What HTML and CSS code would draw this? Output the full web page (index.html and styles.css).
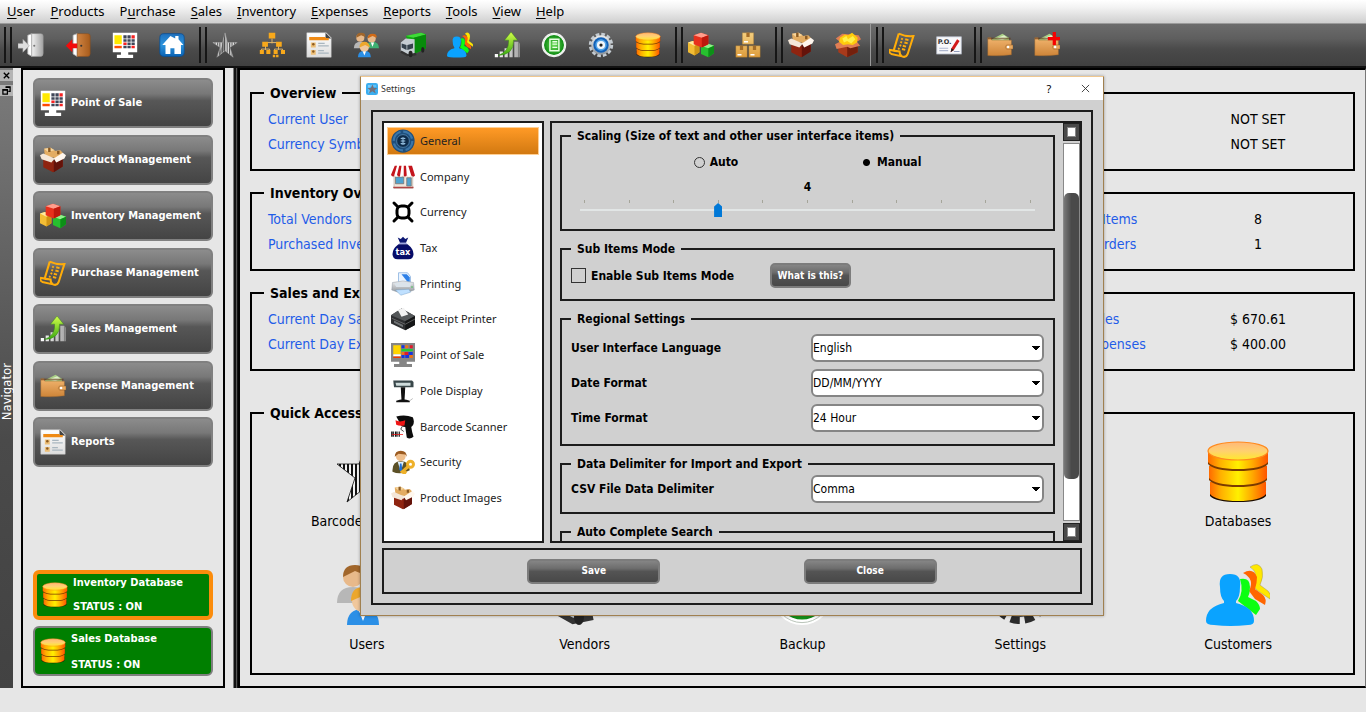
FILE: index.html
```html
<!DOCTYPE html>
<html lang="en">
<head>
<meta charset="utf-8">
<title>Settings</title>
<link rel="stylesheet" href="styles.css">
</head>
<body>
<svg class="sprite" aria-hidden="true">
  <defs>
    <linearGradient id="g-grey" x1="0" x2="1"><stop offset="0" stop-color="#f2f2f2"/><stop offset="1" stop-color="#a2a2a2"/></linearGradient>
    <linearGradient id="g-brown" x1="0" x2="1"><stop offset="0" stop-color="#d08443"/><stop offset="1" stop-color="#a85c1c"/></linearGradient>
    <linearGradient id="g-blue" x1="0" x2="0" y1="0" y2="1"><stop offset="0" stop-color="#1f70bd"/><stop offset=".5" stop-color="#2c94dd"/><stop offset="1" stop-color="#0a62b4"/></linearGradient>
    <linearGradient id="g-db" x1="0" x2="1"><stop offset="0" stop-color="#ff6a00"/><stop offset=".2" stop-color="#ffb000"/><stop offset=".5" stop-color="#fff000"/><stop offset=".75" stop-color="#ffa800"/><stop offset="1" stop-color="#ff5500"/></linearGradient>
    <linearGradient id="g-dbtop" x1="0" x2="0" y1="0" y2="1"><stop offset="0" stop-color="#ffb878"/><stop offset=".5" stop-color="#ffd070"/><stop offset="1" stop-color="#ffe92a"/></linearGradient>
    <linearGradient id="g-bar" x1="0" x2="1"><stop offset="0" stop-color="#ffffff"/><stop offset="1" stop-color="#aaaaaa"/></linearGradient>
    <linearGradient id="g-arrow" x1="0" x2="0" y1="0" y2="1"><stop offset="0" stop-color="#d4ff4a"/><stop offset="1" stop-color="#3aa812"/></linearGradient>
    <radialGradient id="g-green"><stop offset="0" stop-color="#6ede5a"/><stop offset="1" stop-color="#0d8a12"/></radialGradient>
    <linearGradient id="g-card" x1="0" x2="0" y1="0" y2="1"><stop offset="0" stop-color="#f4cf7f"/><stop offset="1" stop-color="#dd9c3c"/></linearGradient>
    <linearGradient id="g-leather" x1="0" x2="0" y1="0" y2="1"><stop offset="0" stop-color="#f2b56f"/><stop offset="1" stop-color="#cd8438"/></linearGradient>
    <linearGradient id="g-page" x1="0" x2="0" y1="0" y2="1"><stop offset="0" stop-color="#ffffff"/><stop offset="1" stop-color="#dcdcdc"/></linearGradient>
    <linearGradient id="g-metal" x1="0" x2="0" y1="0" y2="1"><stop offset="0" stop-color="#eeeeee"/><stop offset="1" stop-color="#8f959b"/></linearGradient>
    <pattern id="p-stripe" width="3" height="4" patternUnits="userSpaceOnUse"><rect width="3" height="4" fill="#e4e4e4"/><rect width="1.4" height="4" fill="#555"/></pattern>
    <pattern id="p-stripe-dark" width="2" height="4" patternUnits="userSpaceOnUse"><rect width="2" height="4" fill="#f2f2f2"/><rect width="1" height="4" fill="#111"/></pattern>
  </defs>

  <symbol id="login" viewBox="0 0 32 32">
    <path d="M12 4 17 2v28l-5-3z" fill="#fff" stroke="#aaa"/><path d="M17 2h11q3 0 3 3v21q0 4-3 4H17z" fill="url(#g-grey)" stroke="#9a9a9a" stroke-width=".6"/>
    <path d="M0 14h6V9l8 8-8 8v-5H0z" fill="#dedede" stroke="#999" stroke-width=".6"/><circle cx="20" cy="17" r="1.3" fill="#777"/>
  </symbol>
  <symbol id="logout" viewBox="0 0 32 32">
    <path d="M10 4 15 2v28l-5-3z" fill="#fff" stroke="#bbb"/><path d="M15 2h13q3 0 3 3v21q0 4-3 4H15z" fill="url(#g-brown)" stroke="#8a4c18" stroke-width=".6"/>
    <path d="M15 14H9V9l-8 8 8 8v-5h6z" fill="#f30b0b"/><circle cx="20" cy="17" r="1.3" fill="#333"/>
  </symbol>
  <symbol id="pos" viewBox="0 0 32 32">
    <path d="M1 1h30v24H20v3h6v4H6v-4h5v-3H1z" fill="#fff"/><rect x="3" y="4" width="9" height="11" fill="#ffe900"/><rect x="3" y="17" width="9" height="3" fill="#ff4a00"/>
    <path d="M14 4h4v4h-4zM19 4h4v4h-4zM14 9h4v3h-4zM19 9h4v3h-4zM24 9h4v3h-4zM19 13h4v3h-4zM24 13h4v3h-4zM14 17h4v3h-4zM19 17h4v3h-4z" fill="#3f4658"/><path d="M24 4h4v4h-4zM14 13h4v3h-4zM24 17h4v3h-4z" fill="#f52222"/>
  </symbol>
  <symbol id="home" viewBox="0 0 32 32">
    <rect x="1" y="2" width="30" height="28" rx="5" fill="url(#g-blue)" stroke="#0a4f94"/><path d="M14 5 4 16h4v11h6v-7h5v7h8V16h3l-6-7V5h-4v3z" fill="#fff"/>
  </symbol>
  <symbol id="star" viewBox="0 0 32 32">
    <path d="m16 1 3 12h12l-9 6 4 12-10-8-10 8 4-12-9-6h12z" fill="url(#p-stripe)" stroke="#bbb" stroke-width=".5"/><path d="M16 3v19l-8 7 4-11z" fill="#333" opacity=".45"/>
  </symbol>
  <symbol id="star-dark" viewBox="0 0 32 32">
    <path d="m16 1 4 11h11l-9 7 4 12-10-8-10 8 4-12-9-7h11z" fill="url(#p-stripe-dark)" stroke="#111" stroke-width=".4"/>
  </symbol>
  <symbol id="tree" viewBox="0 0 32 32">
    <path d="M16 8v6M8 16v-3h16v3M8 17v5M24 17v5M3 24v-3h10v3M19 24v-3h10v3" fill="none" stroke="#e0b66b" stroke-width="1.2"/>
    <path d="M12 1h8v7h-8zM4 12h7v6H4zM21 12h7v6h-7zM1 22h5v5H1zM9 22h5v5H9zM18 22h5v5h-5zM27 22h5v5h-5zM17 28h3v3h-3zM21 28h3v3h-3z" fill="#f7a81b"/>
  </symbol>
  <symbol id="report" viewBox="0 0 32 32">
    <path d="M1 1h24l6 6v24H1z" fill="url(#g-page)" stroke="#c8c8c8" stroke-width=".6"/><path d="M24 1v7h7z" fill="#444"/>
    <path d="M4 6h20v1.500h4V10H4z" fill="#ef8a14"/><path d="M6 13h6v6H6zM6 22h6v6H6z" fill="#edbf77"/><circle cx="9" cy="15" r="1.500" fill="#8a5a22"/><circle cx="9" cy="24" r="1.500" fill="#8a5a22"/>
    <path d="M15 14h8M15 17h13M15 23h7M15 26h13" stroke="#a9b6bf" stroke-width="1.600"/>
  </symbol>
  <symbol id="users" viewBox="0 0 32 32">
    <path d="M1 20q0-8 8-8t8 8z" fill="#b7b7b7"/><circle cx="9" cy="7" r="5" fill="#e8b98a"/><path d="M4 7q0-6 6-6t5 5l-5-2z" fill="#a1662b"/>
    <path d="M16 20q0-8 8-8t8 8z" fill="#3fb073"/><circle cx="23" cy="8" r="5" fill="#e8b98a"/><path d="M18 8q0-6 6-6t5 5l-5-2z" fill="#d06a17"/><path d="m22 13 2 5 2-5z" fill="#fff"/>
    <path d="M6 31q0-8 8-8t8 8z" fill="#2b8fe6"/><circle cx="14" cy="19" r="5.500" fill="#f0c79c"/><path d="M8 19q0-7 6-7t7 7l-6-3z" fill="#eca72c"/><path d="m12 24 2 5 2-5z" fill="#fff"/>
  </symbol>
  <symbol id="truck" viewBox="0 0 32 32">
    <path d="M7 5 26 1l6 2v17l-14 7z" fill="#12a812"/><path d="M7 5 26 1l6 2-15 4z" fill="#3fdb38"/><path d="M17 7 32 3v17l-15 7z" fill="#078b0b"/>
    <path d="M1 13 7 8l11 1v19l-8 2-9-6z" fill="#c5cdd2"/><path d="m2 14 6 2v6l-6-3zM9 16l7-2v6l-7 2z" fill="#35424c"/><path d="M1 24l9 5 10-2" stroke="#333" stroke-width="3" fill="none"/>
    <ellipse cx="13" cy="27" rx="2.500" ry="4" fill="#222"/><ellipse cx="28" cy="22" rx="2" ry="3.500" fill="#222"/>
  </symbol>
  <symbol id="customers" viewBox="0 0 32 32">
    <path d="M22 2q4-3 6 1 1 4-1 8l4 3q2 2 1 4l-6-4-3-3q4-6-1-9z" fill="#ffe800" stroke="#8f8455" stroke-width=".2"/>
    <path d="M18.500 5q5-3 7 2 0 3-1 6l4 3q2 2 1 5l-5-3-3-4q3-6-3-9z" fill="#ff6500"/>
    <path d="M17 8q5-1 5 4 0 3-1 5l4 2q2 2 2 4l-2 3-9-7q3-5 1-11z" fill="#0cff12"/>
    <path d="M7 12q-1-6.500 5-6.500t5 6.500q0 5-2 7v1q9 2 9 9 0 2-3 2-9 1-17 0-4 0-4-2 0-7 9-9v-1q-2-2-2-7z" fill="#0aa3ff"/>
  </symbol>
  <symbol id="chart" viewBox="0 0 32 32">
    <path d="M1 27h4v4H1zM7 24h4v7H7zM13 20h4v11h-4zM19 16h4v15h-4zM25 12h5v19h-5z" fill="url(#g-bar)"/><path d="M30 12v19h2V14z" fill="#888"/>
    <path d="M5 29q14-5 13-19h-5L21 0l8 10h-5q1 18-19 19z" fill="url(#g-arrow)" stroke="#2f8613" stroke-width=".5"/>
  </symbol>
  <symbol id="backup" viewBox="0 0 32 32">
    <circle cx="16" cy="16" r="15" fill="#fff"/><circle cx="16" cy="16" r="13.800" fill="none" stroke="#b9c4b9" stroke-width=".5"/><circle cx="16" cy="16" r="12.300" fill="url(#g-green)"/>
    <path d="M11 9h11v14H11z" fill="none" stroke="#e8ffe2" stroke-width="1.800"/><path d="M14 12h6M14 15h6M14 19h6" stroke="#e8ffe2" stroke-width="1.600"/>
  </symbol>
  <symbol id="gear" viewBox="0 0 32 32">
    <circle cx="16" cy="16" r="13" fill="none" stroke="#c4cbd1" stroke-width="4" stroke-dasharray="4.400 2.400"/><circle cx="16" cy="16" r="12" fill="url(#g-metal)"/><circle cx="16" cy="16" r="9.500" fill="#1261b8"/><circle cx="16" cy="16" r="7" fill="#55a6ea"/><circle cx="16" cy="16" r="5" fill="#f2f6fa"/><circle cx="16" cy="16" r="2" fill="#222"/>
  </symbol>
  <symbol id="gear-dark" viewBox="0 0 32 32">
    <circle cx="16" cy="15" r="13" fill="none" stroke="#2b2b2b" stroke-width="5" stroke-dasharray="4.400 2.400"/><circle cx="16" cy="15" r="12" fill="#444"/><circle cx="16" cy="15" r="9.500" fill="#1261b8"/>
  </symbol>
  <symbol id="db" viewBox="0 0 32 32">
    <path d="M2 23v5q3 3 14 3t14-3v-5z" fill="#1d0d00"/><path d="M2 21v6q3 3.500 14 3.500T30 27v-6z" fill="url(#g-db)"/>
    <path d="M1.500 14v6q3 3.500 14.500 3.500T30.500 20v-6z" fill="#7a3b00"/><path d="M1.500 13v6q3 3.500 14.500 3.500T30.500 19v-6z" fill="url(#g-db)"/>
    <path d="M1 6v6q3 3.500 15 3.500T31 12V6z" fill="#7a3b00"/><path d="M1 5v6q3 3.500 15 3.500T31 11V5z" fill="url(#g-db)"/><ellipse cx="16" cy="5.500" rx="15" ry="4.500" fill="url(#g-dbtop)" stroke="#ff8a1e" stroke-width=".6"/>
  </symbol>
  <symbol id="cubes" viewBox="0 0 32 32">
    <path d="m0 13 6-2 8 3v11l-6 4-8-4z" fill="#f3bd35"/><path d="m0 13 6-2 8 3-6 3z" fill="#ffeaa0"/><path d="M8 17v12l6-4V14z" fill="#cf9415"/>
    <path d="m16 17 8-3 8 3v9l-7 5-9-4z" fill="#27c02f"/><path d="m16 17 8-3 8 3-7 3z" fill="#90f08b"/><path d="M25 20v11l7-5v-9z" fill="#0c8f17"/>
    <path d="m7 4 9-3 9 3v11l-8 4-10-4z" fill="#e8301c"/><path d="m7 4 9-3 9 3-8 3z" fill="#ff9d8c"/><path d="M17 7v12l8-4V4z" fill="#bd180d"/>
  </symbol>
  <symbol id="boxes" viewBox="0 0 32 32">
    <path d="M9 1h14v14H9zM1 17h14v14H1zM17 17h14v14H17z" fill="url(#g-card)" stroke="#9a6a22" stroke-width=".4"/><path d="M14 1h4v5h-4zM6 17h4v5H6zM22 17h4v5h-4z" fill="#a36c28"/><path d="M11 12h5M3 28h5M19 28h5" stroke="#fff" stroke-width="1.800"/>
  </symbol>
  <symbol id="product" viewBox="0 0 32 32">
    <path d="m5 2 8-1 5 3v9H6zM18 5l7-1 3 3-2 7h-9z" fill="#e3ac62"/><path d="m5 2 8-1 5 3-8 2z" fill="#f6d59d"/><path d="M10 1h3v5h-3zM21 5h3v4h-3z" fill="#8b5a22"/>
    <path d="m4 12 13 5 11-6v13l-12 7-12-6z" fill="#8f2410"/><path d="M17 16v15l11-7V11z" fill="#64130a"/>
    <path d="m0 10 4-2 14 6-4 5L2 15z" fill="#f4e6d8"/><path d="m32 10-4-3-11 7 3 5 10-5z" fill="#fff7ee"/>
  </symbol>
  <symbol id="openbox" viewBox="0 0 32 32">
    <path d="M4 14h24v11l-13 6-11-6z" fill="#a83a1b"/><path d="M15 18v13l13-6V14z" fill="#74200d"/><path d="m1 8 8-6 20 2 3 5-5 3 4 5-12 3-4-2-13 3-2-6 6-3z" fill="#e07e54"/>
    <path d="m6 7 6-4 4 1 5-3 7 6-1 6-5 3-6-1-6 1-5-4z" fill="#ffcb0c"/><path d="m9 8 5-3 2 4 6-4 3 4-5 5-5-3-4 2z" fill="#fff04a"/>
  </symbol>
  <symbol id="scroll" viewBox="0 0 32 32">
    <path d="M12 2q9 4 18 3l-7 22q-2 5-7 3L3 27q-4-2-2-5l12 2M12 2 6 22M1 22q6 2 12 2 0 4 3 6" fill="none" stroke="#ffad0a" stroke-width="2.500"/>
    <path d="m15 8 2 1M20 9l4 1M14 12l2 1M19 13l4 1M13 16l2 1M17 17l4 1M11 20l2 1M16 21l4 1" stroke="#ffad0a" stroke-width="2.400"/>
  </symbol>
  <symbol id="wallet" viewBox="0 0 32 32">
    <path d="M6 9 19 2l8 5v4H6z" fill="#a8cf85"/><path d="m11 8 10-4 4 3-6 3z" fill="#dff0c8"/><path d="M1 7h4l1 3h24v18q-14 2-29 1z" fill="url(#g-leather)" stroke="#a3672a" stroke-width=".5"/><path d="M1 7h28v2H1z" fill="#5b3212" opacity=".6"/><path d="M24 16h8v5h-8q-3-2 0-5z" fill="#e7a962" stroke="#8d5722" stroke-width=".6"/><circle cx="26" cy="18.500" r="1.500" fill="#fff"/>
  </symbol>
  <symbol id="wallet-plus" viewBox="0 0 32 32">
    <use href="#wallet"/><path d="M23 0h4v6h5v4h-5v6h-4v-6h-6V6h6z" fill="#f70000"/>
  </symbol>
  <symbol id="app" viewBox="0 0 32 32">
    <rect width="32" height="32" rx="6" fill="#3aaef0"/><path d="M5 8h22M8 5v22" stroke="#a7ddff" stroke-width="2"/><path d="m17 4 4 9h9l-7 6 3 9-9-6-9 6 3-9-7-6h9z" fill="#73707a"/>
  </symbol>
  <symbol id="general" viewBox="0 0 32 32">
    <circle cx="16" cy="16" r="15.500" fill="#1f4f7c"/><circle cx="16" cy="16" r="12.500" fill="none" stroke="#3c76a8" stroke-width="3" stroke-dasharray="16 3.600"/><circle cx="16" cy="16" r="8.500" fill="#0d2b49" stroke="#5b8db8"/><path d="M16 11v10M13 13q3-2 6 0M13 19q3 2 6 0M13 16h6" stroke="#9cc7e8" stroke-width="1.400" fill="none"/>
  </symbol>
  <symbol id="company" viewBox="0 0 32 32">
    <path d="M4 14h25v17H4z" fill="#eee7dc" stroke="#99897b" stroke-width=".6"/><path d="M3 29h27v2H3z" fill="#b04545"/><path d="M6 16h11v9H6zM21 17h6v11h-6z" fill="#4fa3cf" stroke="#79706b"/>
    <path d="M5 1h23l4 13q-2 3-5 0-3 3-5.500 0-3 3-5.500 0-3 3-5.500 0-3 3-5.500 0-3 3-5 0z" fill="#fff"/><path d="M5 1h3L4 15q-3 1-4-2zM11 1h3l-2 14q-3 1-4-2zM17 1h3l1 13q-3 3-4 0zM23 1h5l4 13q-2 3-5 0z" fill="#c4151c"/>
  </symbol>
  <symbol id="currency" viewBox="0 0 32 32">
    <rect x="8" y="8" width="16" height="16" rx="6" fill="none" stroke="#000" stroke-width="4"/><path d="m4 4 5 5M28 4l-5 5M4 28l5-5M28 28l-5-5" stroke="#000" stroke-width="4" stroke-linecap="round"/>
  </symbol>
  <symbol id="tax" viewBox="0 0 32 32">
    <path d="m9 2 4 2 3-3 3 3 4-2-3 7h-8z" fill="#0b1672"/><path d="M10 11h12q8 6 8 13 0 7-7 7H9q-7 0-7-7 0-7 8-13z" fill="#060c68"/><path d="M11 9.800h10" stroke="#8891d8" stroke-width="1.300"/>
  </symbol>
  <symbol id="printing" viewBox="0 0 32 32">
    <path d="M10 1h12l4 5v12H10z" fill="#eaf4ff" stroke="#84aede"/><path d="M14 3h7l4 4v10z" fill="#2d80e8"/><path d="M2 14q14-4 28 0l1 10q-15 7-30 0z" fill="url(#g-metal)" stroke="#8893a0" stroke-width=".6"/><path d="M4 15q12-3 24 0l-3 5H7z" fill="#dbe3ea"/><path d="m6 24 18-1 2 4-13 4z" fill="#bfe0ff" stroke="#6391bd" stroke-width=".5"/><circle cx="28" cy="20" r="1" fill="#30c040"/>
  </symbol>
  <symbol id="receipt" viewBox="0 0 32 32">
    <path d="M0 11 14 2l18 10v12L19 31 0 22z" fill="#2f3032"/><path d="m0 11 14-9 18 10-13 7z" fill="#55585a"/><path d="m9 4 8-3 6 9-9 3z" fill="#f2f2f2"/><path d="m19 19 13-7v12l-13 7z" fill="#151617"/><path d="m1 15 18 8M19 23l13-7" stroke="#888" stroke-width=".8"/><path d="m4 18 12 6v3L4 21z" fill="#6f7274"/>
  </symbol>
  <symbol id="pos-colour" viewBox="0 0 32 32">
    <path d="M0 0h32v25H21v3h7v4H4v-4h7v-3H0z" fill="#858585"/><rect x="3" y="3" width="10" height="12" fill="#ffd500"/><path d="M3 15h10v3H3z" fill="#fff"/><path d="M3 18h10v2H3z" fill="#f33a00"/>
    <path d="M14 3h4v4h-4zM23 12h6v4h-6zM19 16h5v4h-5z" fill="#1636e0"/><path d="M19 3h4v4h-4zM14 12h4v4h-4zM25 16h4v4h-4z" fill="#ef7416"/><path d="M25 3h4v4h-4zM18 12h5v4h-5z" fill="#e3192a"/><path d="M14 8h15v3H14z" fill="#20cc35"/><path d="M14 16h4v4h-4z" fill="#1636e0"/>
  </symbol>
  <symbol id="pole" viewBox="0 0 32 32">
    <path d="M3 2h25l2 2v7H4z" fill="#39474a"/><path d="M6 5h20v4H7z" fill="#cfdcdc"/><path d="M13 11h6l-1 17h-4z" fill="#111"/><path d="M7 29q9-4 18 0v2H7z" fill="#111"/><path d="m25 29 4-3" stroke="#aaa"/>
  </symbol>
  <symbol id="scanner" viewBox="0 0 32 32">
    <path d="M7 2q12-3 22 1 3 6 0 11l-2 2q1 7 3 13-5 4-9 1l-2-14q-6 0-7-5z" fill="#0d0d0d"/><path d="M6 7q6 3 13 0l-1 7q-7 1-11-1z" fill="#ef1515"/><path d="m15 15-2 4 4 3" stroke="#111" fill="none"/><path d="M1 22v7M3 22v7M6 22v7M8 22v7M11 22v7" stroke="#111" stroke-width="1.600"/><path d="M1 26h15" stroke="#e11"/>
  </symbol>
  <symbol id="security" viewBox="0 0 32 32">
    <path d="M2 29q-1-14 11-14t12 12q-12 7-23 2z" fill="#5c5127"/><path d="m9 16 4 13 4-13z" fill="#dff0ff"/><path d="m12 18 2 0 1 8-2 3-2-3z" fill="#1d6ed6"/><circle cx="13" cy="8.500" r="6.500" fill="#efbf8d"/><path d="M5 9q0-8 8-8t8 8l-2-3-9-1z" fill="#9b5b21"/>
    <circle cx="26" cy="19" r="4" fill="none" stroke="#eeb12b" stroke-width="4"/><path d="m23 22-8 7 3 2 2-3" fill="none" stroke="#eeb12b" stroke-width="4"/>
  </symbol>
</svg>

<nav class="menubar" aria-label="Menu">
  <a href="#"><u>U</u>ser</a><a href="#"><u>P</u>roducts</a><a href="#">P<u>u</u>rchase</a><a href="#"><u>S</u>ales</a><a href="#"><u>I</u>nventory</a><a href="#"><u>E</u>xpenses</a><a href="#"><u>R</u>eports</a><a href="#"><u>T</u>ools</a><a href="#"><u>V</u>iew</a><a href="#"><u>H</u>elp</a>
</nav>

<div class="toolbar" role="toolbar">
  <div class="tool-group">
    <button aria-label="Log in"><svg><use href="#login"/></svg></button>
    <button aria-label="Log out"><svg><use href="#logout"/></svg></button>
    <button aria-label="Point of sale"><svg><use href="#pos"/></svg></button>
    <button aria-label="Home"><svg><use href="#home"/></svg></button>
  </div>
  <div class="tool-group">
    <button aria-label="Barcodes"><svg><use href="#star"/></svg></button>
    <button aria-label="Categories"><svg><use href="#tree"/></svg></button>
    <button aria-label="Reports"><svg><use href="#report"/></svg></button>
    <button aria-label="Users"><svg><use href="#users"/></svg></button>
    <button aria-label="Vendors"><svg><use href="#truck"/></svg></button>
    <button aria-label="Customers"><svg><use href="#customers"/></svg></button>
    <button aria-label="Sales"><svg><use href="#chart"/></svg></button>
    <button aria-label="Backup"><svg><use href="#backup"/></svg></button>
    <button aria-label="Settings"><svg><use href="#gear"/></svg></button>
    <button aria-label="Databases"><svg><use href="#db"/></svg></button>
  </div>
  <div class="tool-group">
    <button aria-label="Inventory"><svg><use href="#cubes"/></svg></button>
    <button aria-label="Stock"><svg><use href="#boxes"/></svg></button>
  </div>
  <div class="tool-group tool-group-end">
    <button aria-label="Products"><svg><use href="#product"/></svg></button>
    <button aria-label="New product"><svg><use href="#openbox"/></svg></button>
  </div>
  <div class="tool-group tool-group-next">
    <button aria-label="Purchases"><svg><use href="#scroll"/></svg></button>
    <button aria-label="Purchase order"><svg viewBox="0 0 32 32"><rect x="1" y="6" width="30" height="21" fill="#f8f8fa" stroke="#c8cfdd"/><text x="2" y="15" class="po-text">P.O.</text><path d="M4 20h11M4 23h11" stroke="#aeb7cf" stroke-width="1.500"/><path d="m26 9 3 2-7 11-4 3 1-5z" fill="#d21919"/><path d="m19 20 3 2-4 3z" fill="#222"/><path d="M22 24h7" stroke="#7a86ad"/></svg></button>
  </div>
  <div class="tool-group">
    <button aria-label="Expenses"><svg><use href="#wallet"/></svg></button>
    <button aria-label="Add expense"><svg><use href="#wallet-plus"/></svg></button>
  </div>
</div>

<div class="workspace">
  <div class="dock">
    <div class="dock-buttons">
      <button aria-label="Close navigator"><svg viewBox="0 0 10 10"><path d="m2 2 6 6M8 2 2 8" stroke="#000" stroke-width="1.500"/></svg></button>
      <button aria-label="Float navigator"><svg viewBox="0 0 10 10"><path d="M4 1h5v5H7M1 4h5v5H1z" fill="none" stroke="#000" stroke-width="1.400"/><path d="M1 4.500h5M4 1.500h5" stroke="#000" stroke-width="1.600"/></svg></button>
    </div>
    <span class="dock-title">Navigator</span>
  </div>

  <aside class="navigator">
    <div class="nav-list">
      <button class="nav-button"><svg><use href="#pos"/></svg>Point of Sale</button>
      <button class="nav-button"><svg><use href="#product"/></svg>Product Management</button>
      <button class="nav-button"><svg><use href="#cubes"/></svg>Inventory Management</button>
      <button class="nav-button"><svg><use href="#scroll"/></svg>Purchase Management</button>
      <button class="nav-button"><svg><use href="#chart"/></svg>Sales Management</button>
      <button class="nav-button"><svg><use href="#wallet"/></svg>Expense Management</button>
      <button class="nav-button"><svg><use href="#report"/></svg>Reports</button>
    </div>
    <div class="status-list">
      <button class="status-button status-active"><svg><use href="#db"/></svg><span>Inventory Database</span><span>STATUS : ON</span></button>
      <button class="status-button"><svg><use href="#db"/></svg><span>Sales Database</span><span>STATUS : ON</span></button>
    </div>
  </aside>

  <div class="splitter"></div>

  <main class="dashboard">
    <fieldset class="group">
      <legend>Overview</legend>
      <div class="facts">
        <span>Current User</span><b class="value-late">NOT SET</b>
        <span>Currency Symbol</span><b class="value-late">NOT SET</b>
      </div>
    </fieldset>
    <fieldset class="group">
      <legend>Inventory Overview</legend>
      <div class="facts">
        <span>Total Vendors</span><span>Total Purchased Items</span><b>8</b>
        <span>Purchased Inventory</span><span>Total Purchase Orders</span><b>1</b>
      </div>
    </fieldset>
    <fieldset class="group">
      <legend>Sales and Expenses</legend>
      <div class="facts">
        <span>Current Day Sales</span><span>Previous Day Sales</span><b>$ 670.61</b>
        <span>Current Day Expenses</span><span>Previous Day Expenses</span><b>$ 400.00</b>
      </div>
    </fieldset>
    <fieldset class="group quick">
      <legend>Quick Access</legend>
      <div class="quick-grid">
        <button><svg><use href="#star-dark"/></svg>Barcode Designer</button>
        <button class="last"><svg><use href="#db"/></svg>Databases</button>
        <button><svg><use href="#users"/></svg>Users</button>
        <button><svg><use href="#truck"/></svg>Vendors</button>
        <button><svg><use href="#backup"/></svg>Backup</button>
        <button><svg><use href="#gear-dark"/></svg>Settings</button>
        <button><svg><use href="#customers"/></svg>Customers</button>
      </div>
    </fieldset>
  </main>
</div>

<section class="dialog" role="dialog" aria-labelledby="dialog-title">
  <header class="titlebar">
    <svg><use href="#app"/></svg><h1 id="dialog-title">Settings</h1>
    <button class="help">?</button>
    <button aria-label="Close window"><svg viewBox="0 0 10 10"><path d="m1 1 8 8M9 1 1 9" stroke="#333" stroke-width="1"/></svg></button>
  </header>
  <div class="dialog-body">
    <div class="dialog-frame">
      <div class="columns">
        <nav class="pages" aria-label="Settings pages">
          <a href="#" class="current"><svg><use href="#general"/></svg>General</a>
          <a href="#"><svg><use href="#company"/></svg>Company</a>
          <a href="#"><svg><use href="#currency"/></svg>Currency</a>
          <a href="#"><svg viewBox="0 0 32 32"><use href="#tax"/><text x="16" y="25" text-anchor="middle" class="tax-text">tax</text></svg>Tax</a>
          <a href="#"><svg><use href="#printing"/></svg>Printing</a>
          <a href="#"><svg><use href="#receipt"/></svg>Receipt Printer</a>
          <a href="#"><svg><use href="#pos-colour"/></svg>Point of Sale</a>
          <a href="#"><svg><use href="#pole"/></svg>Pole Display</a>
          <a href="#"><svg><use href="#scanner"/></svg>Barcode Scanner</a>
          <a href="#"><svg><use href="#security"/></svg>Security</a>
          <a href="#"><svg><use href="#product"/></svg>Product Images</a>
        </nav>
        <div class="pane">
          <form class="options">
            <fieldset class="box scaling">
              <legend>Scaling (Size of text and other user interface items)</legend>
              <div class="radios">
                <label><input type="radio" name="scaling">Auto</label>
                <label><input type="radio" name="scaling" checked>Manual</label>
              </div>
              <label class="scale-value" for="scale">4</label>
              <div class="ticks"><i></i><i></i><i></i><i></i><i></i><i></i><i></i><i></i><i></i><i></i><i></i></div>
              <input class="slider" id="scale" type="range" min="1" max="11" value="4">
            </fieldset>
            <fieldset class="box sub-items">
              <legend>Sub Items Mode</legend>
              <div class="sub-row">
                <label><input type="checkbox">Enable Sub Items Mode</label>
                <button type="button" class="dark-button">What is this?</button>
              </div>
            </fieldset>
            <fieldset class="box regional">
              <legend>Regional Settings</legend>
              <label for="language">User Interface Language</label><select id="language"><option>English</option></select>
              <label for="date">Date Format</label><select id="date"><option>DD/MM/YYYY</option></select>
              <label for="time">Time Format</label><select id="time"><option>24 Hour</option></select>
            </fieldset>
            <fieldset class="box delimiter">
              <legend>Data Delimiter for Import and Export</legend>
              <label for="csv">CSV File Data Delimiter</label><select id="csv"><option>Comma</option></select>
            </fieldset>
            <fieldset class="box auto-complete">
              <legend>Auto Complete Search</legend>
            </fieldset>
          </form>
          <div class="scrollbar" aria-hidden="true">
            <span class="cap"></span><div class="track"><span class="thumb"></span></div><span class="cap"></span>
          </div>
        </div>
      </div>
      <footer class="actions">
        <button class="dark-button">Save</button>
        <button class="dark-button">Close</button>
      </footer>
    </div>
  </div>
</section>
</body>
</html>
```
FILE: styles.css
```css
* { box-sizing: border-box; }
html { height: 100%; }
body {
  margin: 0;
  min-height: 100%;
  display: flex;
  flex-direction: column;
  background: #e6e6e6;
  color: #000;
  font: 14px/18px "DejaVu Sans Condensed", "DejaVu Sans", sans-serif;
}
button { font: inherit; color: inherit; border: 0; background: none; padding: 0; }
a { color: inherit; text-decoration: none; }
fieldset { margin: 0; min-width: 0; }
.sprite { position: absolute; width: 0; height: 0; }
.po-text { font: bold 8px "DejaVu Sans", sans-serif; fill: #333; }
.tax-text { font: bold 11px "DejaVu Sans", sans-serif; fill: #fff; }

/* Menu bar */
.menubar {
  display: flex;
  gap: 15px;
  height: 23px;
  padding: 0 7px 2px;
  align-items: center;
  background: linear-gradient(#ffffff, #f4f4f4 30%, #cfcfcf);
  font: 13px/20px "Noto Sans", sans-serif;
}
.menubar u { text-underline-offset: 2px; }

/* Toolbar */
.toolbar {
  display: flex;
  align-items: stretch;
  height: 45px;
  border-top: 1px solid #9b9b9b;
  border-bottom: 2px solid #111;
  background: linear-gradient(#6c6c6c, #5e5e5e 35%, #4a4a4a 60%, #404040);
}
.tool-group { display: flex; align-items: center; gap: 21px; padding-right: 14px; }
.tool-group::before {
  content: "";
  align-self: stretch;
  width: 4px;
  margin: 3px -16px 3px 0;
  border: solid #161616;
  border-width: 0 2px;
}
.tool-group:first-child { padding-left: 4px; }
.tool-group:first-child::before { margin-right: -15px; }
.tool-group-end { padding-right: 9px; border-right: 1px solid #999; }
.tool-group-next { padding-left: 5px; padding-right: 12px; }
.toolbar svg { display: block; width: 26px; height: 26px; }

/* Workspace */
.workspace { flex: 1; display: flex; padding-bottom: 24px; }
.dock {
  width: 13px;
  background: linear-gradient(#7c7c7c, #4a4a4a 60%, #424242);
  display: flex;
  flex-direction: column;
}
.dock-buttons { display: grid; gap: 4px; padding-top: 2px; }
.dock-buttons button { display: grid; place-items: center; height: 11px; background: #b4b4b4; }
.dock-buttons svg { width: 9px; height: 9px; }
.dock-title {
  margin-top: 267px;
  writing-mode: vertical-rl;
  transform: rotate(180deg);
  color: #fff;
  font-size: 13px;
  line-height: 13px;
}
.navigator {
  display: flex;
  flex-direction: column;
  width: 204px;
  margin-left: 8px;
  padding: 8px 10px 10px;
  border: 2px solid #000;
  color: #fff;
  font-size: 11px;
  font-weight: bold;
}
.nav-list {
  flex: 1;
  display: flex;
  flex-direction: column;
  justify-content: space-between;
  padding-bottom: 103px;
}
.nav-button {
  display: flex;
  align-items: center;
  gap: 5px;
  height: 50px;
  padding: 0 5px;
  border: 2px solid #808080;
  border-radius: 6px;
  background: linear-gradient(#8c8c8c, #787878 30%, #575757 45%, #444);
}
.nav-button svg { width: 26px; height: 26px; }
.status-list { display: grid; gap: 6px; }
.status-button {
  display: grid;
  grid-template-columns: 26px auto;
  grid-template-rows: 1fr 1fr;
  column-gap: 5px;
  align-items: center;
  justify-content: start;
  height: 50px;
  padding: 0 5px;
  border: 2px solid #808080;
  border-radius: 6px;
  background: #007f00;
  text-align: left;
}
.status-button svg { width: 26px; height: 26px; grid-row: span 2; }
.status-button span:last-child { padding-top: 6px; }
.status-active { border: 4px solid #fb8c0c; }
.splitter {
  width: 5px;
  margin-left: 8px;
  background: linear-gradient(90deg, #777 0 1px, #111 1px 3px, #555 3px 4px, #111 4px);
}

/* Dashboard */
.dashboard {
  flex: 1;
  display: flex;
  flex-direction: column;
  gap: 13px;
  padding: 14px 10px 11px;
  border: solid #000;
  border-width: 2px 1px 2px 2px;
  border-right-color: #777;
}
.group { padding: 8px 16px 16px; border: 2px solid #000; }
.group legend { margin-left: -4px; padding: 0 6px; font-weight: bold; }
.facts {
  display: grid;
  grid-template-columns: 731fr 179fr 158fr;
  row-gap: 7px;
  color: #1f5ce8;
}
.facts b { color: #000; font-weight: normal; text-align: center; }
.facts .value-late { grid-column: 3; }
.quick { flex: 1; margin-top: 20px; padding: 18px 6px 10px; }
.quick legend { margin-left: 6px; }
.quick-grid {
  display: grid;
  grid-template-columns: repeat(5, 1fr);
  row-gap: 33px;
}
.quick-grid button { display: grid; justify-items: center; gap: 8px; }
.quick-grid .last { grid-column: 5; }
.quick-grid svg { width: 64px; height: 64px; }

/* Settings window */
.dialog {
  position: absolute;
  left: 360px;
  top: 76px;
  width: 744px;
  height: 540px;
  display: flex;
  flex-direction: column;
  border: 1px solid #a08050;
  border-top-color: #f0c890;
  background: #d0d0d0;
  box-shadow: 0 0 3px #0005;
  font-size: 12px;
}
.titlebar {
  display: flex;
  align-items: center;
  gap: 3px;
  height: 23px;
  padding: 0 12px 0 5px;
  background: #fff;
}
.titlebar svg { width: 12px; height: 12px; }
.titlebar h1 { margin: 0; font: 9px/14px "Noto Sans", sans-serif; color: #333; }
.titlebar button { display: grid; place-items: center; width: 12px; height: 20px; }
.titlebar button svg { width: 9px; height: 9px; }
.titlebar .help { margin: 0 21px 0 auto; font: 11px/20px "Noto Sans", sans-serif; }
.dialog-body { flex: 1; display: flex; padding: 10px; min-height: 0; }
.dialog-frame {
  flex: 1;
  display: flex;
  flex-direction: column;
  gap: 5px;
  padding: 9px;
  border: 2px solid #1c1c1c;
  min-height: 0;
}
.columns { flex: 1; display: flex; gap: 6px; min-height: 0; }
.pages {
  display: flex;
  flex-direction: column;
  justify-content: space-between;
  width: 162px;
  padding: 4px 3px 29px;
  border: 2px solid #1c1c1c;
  background: #fff;
  color: #222;
  font: 11px/16px "Noto Sans", sans-serif;
}
.pages a { display: flex; align-items: center; gap: 5px; height: 28px; padding: 0 3px; border: 1px solid transparent; }
.pages .current { border-color: #ffcf94; background: linear-gradient(#ff9a26, #d27911); }
.pages svg { width: 24px; height: 24px; }
.pane { flex: 1; display: flex; border: 2px solid #1c1c1c; min-width: 0; overflow: hidden; }
.options {
  flex: 1;
  padding: 5px 8px 0;
  font-weight: bold;
  line-height: 16px;
  overflow: hidden;
}
.box { border: 2px solid #1c1c1c; padding: 0 9px 12px; margin-bottom: 10px; }
.box legend { padding: 0 6px; }
.box input { appearance: none; margin: 0; }
.radios { display: flex; justify-content: space-evenly; padding-top: 10px; }
.radios label { display: flex; align-items: center; gap: 5px; }
.radios input { width: 11px; height: 11px; border: 1px solid #333; border-radius: 50%; }
.radios input:checked { border-color: transparent; background: radial-gradient(#000 3px, transparent 4px); }
.scale-value { display: block; margin-top: 9px; text-align: center; }
.ticks { display: flex; justify-content: space-between; padding: 5px 13px 0; height: 8px; }
.ticks i { width: 1px; background: #a5a59a; }
.slider {
  display: block;
  width: calc(100% - 18px);
  height: 14px;
  background: linear-gradient(#e2e6e6, #e2e6e6) center / 100% 2px no-repeat;
}
.box .slider { margin: 0 9px; }
.slider::-webkit-slider-thumb {
  appearance: none;
  width: 8px;
  height: 14px;
  background: #0078d7;
  clip-path: polygon(50% 0, 100% 25%, 100% 100%, 0 100%, 0 25%);
}
.sub-items { padding-top: 6px; padding-bottom: 11px; }
.sub-row { display: flex; align-items: center; gap: 36px; }
.sub-row label { display: flex; align-items: center; gap: 5px; }
.sub-row input { width: 15px; height: 15px; border: 1px solid #333; }
.regional, .delimiter {
  display: grid;
  grid-template-columns: 240px 1fr;
  row-gap: 7px;
  align-items: center;
}
.regional { padding-top: 7px; padding-bottom: 12px; }
.delimiter { padding-top: 3px; padding-bottom: 9px; }
.box select {
  appearance: none;
  height: 28px;
  padding: 0;
  border: 2px solid #858585;
  border-radius: 6px;
  background: conic-gradient(from 315deg at 50% 100%, #000 90deg, transparent 0) right 2px center / 8px 4px no-repeat, #fff;
  color: #000;
  font: 12px/18px "DejaVu Sans Condensed", "DejaVu Sans", sans-serif;
}
.dark-button {
  width: 133px;
  height: 25px;
  border: 2px solid #7c7c7c;
  border-radius: 5px;
  background: linear-gradient(#858585, #6d6d6d 35%, #545454 50%, #484848);
  color: #fff;
  font-size: 10px;
  font-weight: bold;
  line-height: 16px;
}
.sub-row .dark-button { width: 81px; }
.auto-complete { height: 60px; }

.scrollbar { display: flex; flex-direction: column; gap: 2px; width: 17px; }
.cap { height: 18px; border: 4px solid #4a4a4a; outline: 1px solid #222; outline-offset: -1px; background: #fff; box-shadow: inset 0 0 0 1px #888; }
.track { flex: 1; display: flex; padding-top: 49px; border: 1px solid #888; background: #fff; }
.thumb { flex: 1; height: 286px; border-radius: 5px; background: linear-gradient(90deg, #777, #4a4a4a 50%); }

.actions {
  display: flex;
  justify-content: space-evenly;
  align-items: center;
  height: 46px;
  border: 2px solid #1c1c1c;
}
```
